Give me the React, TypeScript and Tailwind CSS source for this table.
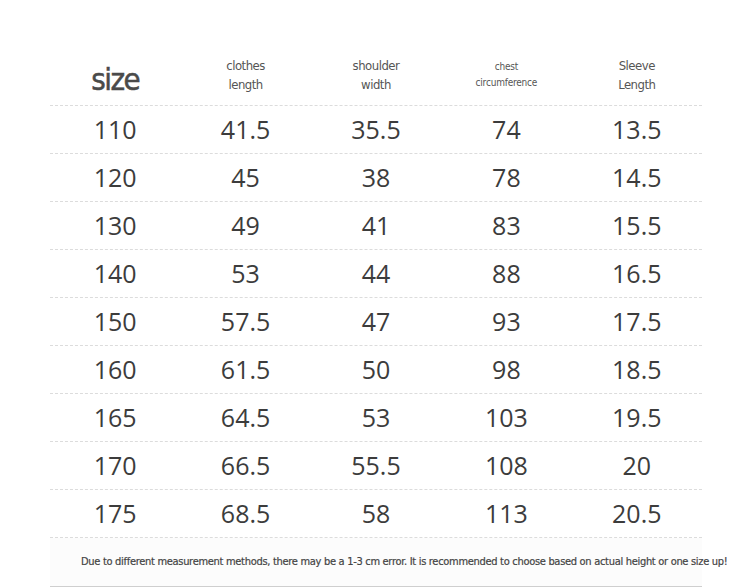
const rows = [
  ['110', '41.5', '35.5', '74', '13.5'],
  ['120', '45', '38', '78', '14.5'],
  ['130', '49', '41', '83', '15.5'],
  ['140', '53', '44', '88', '16.5'],
  ['150', '57.5', '47', '93', '17.5'],
  ['160', '61.5', '50', '98', '18.5'],
  ['165', '64.5', '53', '103', '19.5'],
  ['170', '66.5', '55.5', '108', '20'],
  ['175', '68.5', '58', '113', '20.5'],
]

const cond = { fontFamily: '"DejaVu Sans Condensed", "DejaVu Sans", sans-serif', fontStretch: 'condensed' }

export default function App() {
  return (
    <div className="w-[750px] h-[588px] bg-white overflow-hidden pt-[50px]">
      <div className="ml-[50px] w-[652px]">
        {/* header */}
        <div className="grid grid-cols-5 h-[56px] border-b border-dashed border-[#dcdcdc] text-[#555]" style={cond}>
          <div className="flex items-center justify-center pt-[3px] text-[31px] tracking-[-1.6px] text-[#4a4a4a] [-webkit-text-stroke:0.5px_#4a4a4a]">size</div>
          <div className="flex flex-col items-center justify-center text-[13px] tracking-[-0.5px] leading-[19px] pb-[6px]">
            <span>clothes</span>
            <span>length</span>
          </div>
          <div className="flex flex-col items-center justify-center text-[13px] tracking-[-0.5px] leading-[19px] pb-[6px]">
            <span>shoulder</span>
            <span>width</span>
          </div>
          <div className="flex flex-col items-center justify-center text-[10px] tracking-[-0.2px] leading-[16px] pb-[6px]">
            <span>chest</span>
            <span>circumference</span>
          </div>
          <div className="flex flex-col items-center justify-center text-[13px] tracking-[-0.5px] leading-[19px] pb-[6px]">
            <span>Sleeve</span>
            <span>Length</span>
          </div>
        </div>

        {/* rows */}
        {rows.map((r) => (
          <div
            key={r[0]}
            className="grid grid-cols-5 h-[48px] border-b border-dashed border-[#dcdcdc] font-['Open_Sans',sans-serif] text-[25px] text-[#3c3c3c]"
          >
            {r.map((v, i) => (
              <div key={i} className="flex items-center justify-center">{v}</div>
            ))}
          </div>
        ))}

        {/* note */}
        <div className="h-[49px] flex items-center border-b border-[#cfcfcf] bg-[#fcfcfc]">
          <span className="pl-[31px] whitespace-nowrap text-[11px] tracking-[-0.3px] text-[#444] [-webkit-text-stroke:0.2px_#444]" style={cond}>
            Due to different measurement methods, there may be a 1-3 cm error. It is recommended to choose based on actual height or one size up!
          </span>
        </div>
      </div>
    </div>
  )
}
